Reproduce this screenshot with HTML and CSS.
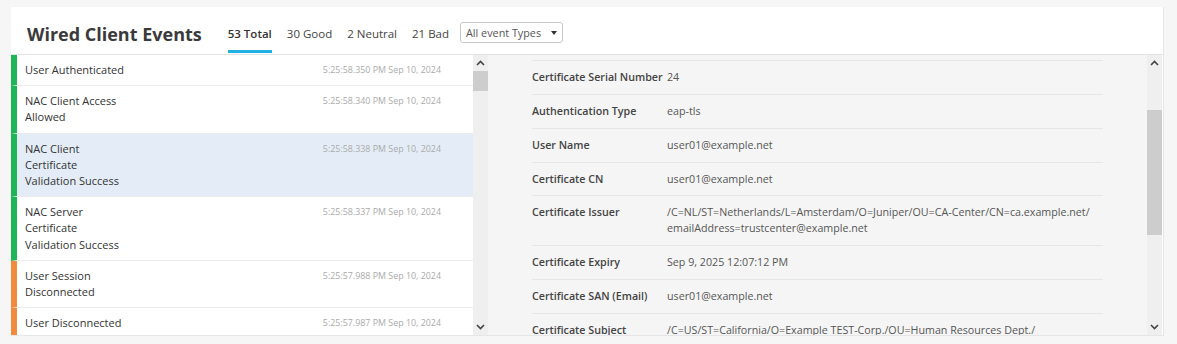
FILE: index.html
```html
<!DOCTYPE html>
<html lang="en">
<head>
    <meta charset="UTF-8">
    <title>Wired Client Events</title>
    <link rel="stylesheet" href="styles.css">
</head>
<body>

<div class="card">
    <div class="header">
        <h1 class="title">Wired Client Events</h1>
        <div class="tab active">53 Total</div>
        <div class="tab">30 Good</div>
        <div class="tab">2 Neutral</div>
        <div class="tab">21 Bad</div>
        <div class="select">All event Types <span class="caret"></span></div>
    </div>

    <div class="body">
        <div class="events">
            <div class="event good">
                <div class="name">User Authenticated</div>
                <div class="time">5:25:58.350 PM Sep 10, 2024</div>
            </div>
            <div class="event good">
                <div class="name">NAC Client Access<br>Allowed</div>
                <div class="time">5:25:58.340 PM Sep 10, 2024</div>
            </div>
            <div class="event good selected">
                <div class="name">NAC Client<br>Certificate<br>Validation Success</div>
                <div class="time">5:25:58.338 PM Sep 10, 2024</div>
            </div>
            <div class="event good">
                <div class="name">NAC Server<br>Certificate<br>Validation Success</div>
                <div class="time">5:25:58.337 PM Sep 10, 2024</div>
            </div>
            <div class="event bad">
                <div class="name">User Session<br>Disconnected</div>
                <div class="time">5:25:57.988 PM Sep 10, 2024</div>
            </div>
            <div class="event bad">
                <div class="name">User Disconnected</div>
                <div class="time">5:25:57.987 PM Sep 10, 2024</div>
            </div>
        </div>
        <div class="scrollbar">
            <svg class="arrow" width="9" height="6" viewBox="0 0 9 6"><polyline points="1,5 4.5,1.5 8,5" fill="none" stroke="#444" stroke-width="1.6"/></svg>
            <div class="track"><div class="thumb list-thumb"></div></div>
            <svg class="arrow" width="9" height="6" viewBox="0 0 9 6"><polyline points="1,1 4.5,4.5 8,1" fill="none" stroke="#444" stroke-width="1.6"/></svg>
        </div>

        <div class="details">
            <div class="rows">
                <div class="row"><div class="label">Certificate Serial Number</div><div class="value">24</div></div>
                <div class="row"><div class="label">Authentication Type</div><div class="value">eap-tls</div></div>
                <div class="row"><div class="label">User Name</div><div class="value">user01@example.net</div></div>
                <div class="row"><div class="label">Certificate CN</div><div class="value">user01@example.net</div></div>
                <div class="row"><div class="label">Certificate Issuer</div><div class="value">/C=NL/ST=Netherlands/L=Amsterdam/O=Juniper/OU=CA-Center/CN=ca.example.net/<br>emailAddress=trustcenter@example.net</div></div>
                <div class="row"><div class="label">Certificate Expiry</div><div class="value">Sep 9, 2025 12:07:12 PM</div></div>
                <div class="row"><div class="label">Certificate SAN (Email)</div><div class="value">user01@example.net</div></div>
                <div class="row"><div class="label">Certificate Subject</div><div class="value">/C=US/ST=California/O=Example TEST-Corp./OU=Human Resources Dept./</div></div>
            </div>
        </div>
        <div class="scrollbar">
            <svg class="arrow" width="9" height="6" viewBox="0 0 9 6"><polyline points="1,5 4.5,1.5 8,5" fill="none" stroke="#444" stroke-width="1.6"/></svg>
            <div class="track"><div class="thumb detail-thumb"></div></div>
            <svg class="arrow" width="9" height="6" viewBox="0 0 9 6"><polyline points="1,1 4.5,4.5 8,1" fill="none" stroke="#444" stroke-width="1.6"/></svg>
        </div>
    </div>
</div>

</body>
</html>
```

FILE: styles.css
```css
body {
    margin: 0;
    padding: 7px 14px 0 11px;
    background-color: #f6f6f6;
    font-family: "Open Sans", "Noto Sans", sans-serif;
    color: #333;
}
.card {
    background-color: #fff;
    border: 1px solid #e6e6e6;
    border-left: none;
    border-top: none;
    width: 1152px;
}
.header {
    display: flex;
    align-items: flex-end;
    height: 47px;
    padding-left: 16px;
    border-bottom: 1px solid #e4e4e4;
}
.title {
    margin: 0 26px 8px 0;
    font-size: 18px;
    line-height: 24px;
    font-weight: 700;
    color: #3a3a3a;
}
.tab {
    font-size: 11.5px;
    line-height: 16px;
    color: #444;
    margin: 0 15px 1px 0;
    padding-bottom: 8px;
    border-bottom: 3px solid transparent;
}
.tab.active {
    font-weight: 600;
    color: #333;
    border-bottom-color: #22b0e6;
}
.select {
    display: flex;
    align-items: center;
    justify-content: space-between;
    box-sizing: border-box;
    width: 103px;
    height: 21px;
    margin: 0 0 11px -4px;
    padding: 0 5px 0 5px;
    border: 1px solid #c8c8c8;
    border-radius: 3px;
    font-size: 10.8px;
    color: #555;
}
.caret {
    width: 0;
    height: 0;
    border-left: 3.5px solid transparent;
    border-right: 3.5px solid transparent;
    border-top: 4px solid #333;
}
.body {
    display: flex;
    height: 280px;
}
.events {
    width: 462px;
    overflow: hidden;
}
.event {
    display: flex;
    justify-content: space-between;
    padding: 7px 32px 7px 8px;
    border-left: 6px solid #1db556;
    border-bottom: 1px solid #ececec;
}
.event.bad {
    border-left-color: #ef8a3e;
}
.event.selected {
    background-color: #e4edf7;
}
.name {
    font-size: 11px;
    line-height: 16.2px;
    font-weight: 500;
    color: #333;
}
.time {
    font-size: 8.9px;
    line-height: 16px;
    color: #aaa;
}
.scrollbar {
    display: flex;
    flex-direction: column;
    align-items: center;
    width: 15px;
    background-color: #efefef;
}
.arrow {
    margin: 5px 0;
}
.track {
    flex: 1;
    width: 15px;
}
.thumb {
    background-color: #cdcdcd;
}
.list-thumb {
    height: 20px;
}
.detail-thumb {
    height: 125px;
    margin-top: 39px;
}
.details {
    width: 659px;
    background-color: #f5f5f5;
    overflow: hidden;
}
.rows {
    margin: 5px 44px 0 44px;
}
.row {
    display: flex;
    padding: 8px 0 8.85px;
    border-top: 1px solid #e6e6e6;
    font-size: 10.7px;
    line-height: 16px;
}
.label {
    width: 135px;
    flex-shrink: 0;
    font-weight: 600;
    color: #444;
}
.value {
    color: #555;
}
```
